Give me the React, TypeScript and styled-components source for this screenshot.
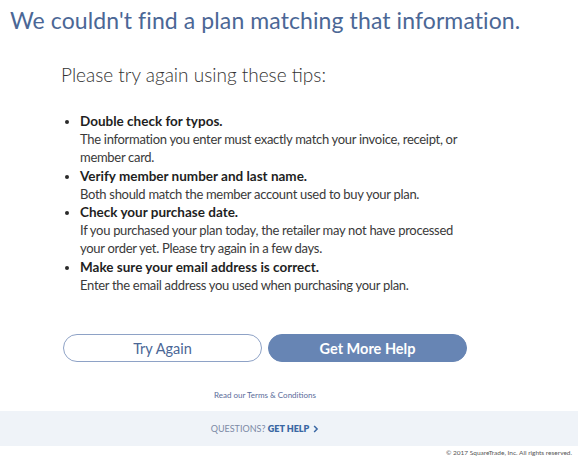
import React from 'react'
import styled, { createGlobalStyle } from 'styled-components'

const GlobalStyle = createGlobalStyle`
    body {
        margin: 0;
        background: #fff;
        font-family: Lato, "Open Sans", sans-serif;
        color: #2b2b2b;
    }
`

const tips = [
    {
        title: 'Double check for typos.',
        text: 'The information you enter must exactly match your invoice, receipt, or member card.'
    },
    {
        title: 'Verify member number and last name.',
        text: 'Both should match the member account used to buy your plan.'
    },
    {
        title: 'Check your purchase date.',
        text: 'If you purchased your plan today, the retailer may not have processed your order yet. Please try again in a few days.'
    },
    {
        title: 'Make sure your email address is correct.',
        text: 'Enter the email address you used when purchasing your plan.'
    }
]

const App: React.FC = () => {
    return (
        <Page>
            <GlobalStyle />
            <Title>We couldn't find a plan matching that information.</Title>
            <Content>
                <Subtitle>Please try again using these tips:</Subtitle>
                <TipList>
                    {tips.map(tip => (
                        <Tip key={tip.title}>
                            <TipTitle>{tip.title}</TipTitle>
                            <TipText>{tip.text}</TipText>
                        </Tip>
                    ))}
                </TipList>
                <Actions>
                    <Button>Try Again</Button>
                    <Button primary>Get More Help</Button>
                </Actions>
                <Terms href="#">Read our Terms &amp; Conditions</Terms>
            </Content>
            <HelpBand>
                <HelpInner>
                    QUESTIONS? <strong>GET HELP</strong>
                    <Chevron viewBox="0 0 8 10" width="6" height="8">
                        <path d="M1.5 1 L5.5 5 L1.5 9" fill="none" stroke="#3a67a3" strokeWidth="2" />
                    </Chevron>
                </HelpInner>
            </HelpBand>
            <Copyright>© 2017 SquareTrade, Inc. All rights reserved.</Copyright>
        </Page>
    )
}

const Page = styled.div`
    width: 578px;
    height: 463px;
    overflow: hidden;
`

const Title = styled.h1`
    margin: 0;
    padding: 6px 0 0 10px;
    font-size: 23px;
    line-height: 28px;
    letter-spacing: 0.1px;
    font-weight: 400;
    color: #4b6796;
`

const Content = styled.div`
    width: 404px;
    padding-left: 63px;
`

const Subtitle = styled.h2`
    margin: 29px 0 0 -2px;
    font-size: 19px;
    line-height: 24px;
    font-weight: 300;
    color: #333;
`

const TipList = styled.ul`
    margin: 25px 0 0;
    padding: 0 0 0 17px;
    width: 400px;
`

const Tip = styled.li`
    font-size: 13.5px;
    line-height: 18.2px;
    color: #2b2b2b;
`

const TipTitle = styled.div`
    font-weight: 700;
    color: #1f1f1f;
`

const TipText = styled.div`
    font-size: 13px;
    letter-spacing: -0.3px;
    font-weight: 400;
    color: #3a3a3a;
`

const Actions = styled.div`
    display: flex;
    gap: 6px;
    margin-top: 40px;
`

const Button = styled.button<{ primary?: boolean }>`
    width: 199px;
    height: 28px;
    border-radius: 14px;
    border: 1px solid ${p => (p.primary ? '#6785b4' : '#8ea2c6')};
    background: ${p => (p.primary ? '#6785b4' : '#fff')};
    color: ${p => (p.primary ? '#fff' : '#4b6796')};
    font-family: inherit;
    font-size: 14.5px;
    font-weight: ${p => (p.primary ? 700 : 400)};
    cursor: pointer;
`

const Terms = styled.a`
    display: block;
    margin-top: 28px;
    text-align: center;
    font-size: 8px;
    color: #5a6c9a;
    text-decoration: none;
`

const HelpBand = styled.div`
    margin-top: 11px;
    height: 35px;
    background: #eff3f8;
    display: flex;
    align-items: center;
`

const HelpInner = styled.div`
    width: 404px;
    margin-left: 63px;
    text-align: center;
    font-size: 9px;
    color: #7c8aa6;

    strong {
        color: #3a67a3;
        font-weight: 800;
    }
`

const Chevron = styled.svg`
    margin-left: 4px;
    vertical-align: -0.5px;
`

const Copyright = styled.div`
    text-align: right;
    padding: 3px 6px 0 0;
    font-size: 6.5px;
    color: #555;
`

export default App
